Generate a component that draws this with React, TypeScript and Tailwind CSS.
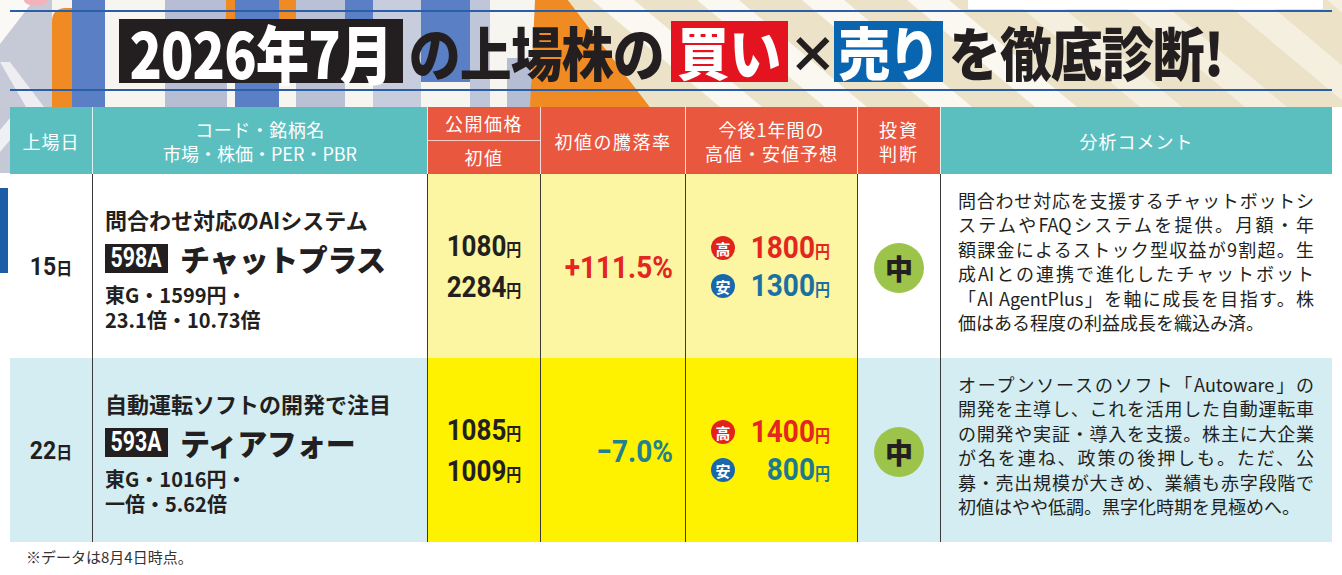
import React from "react";

const cjk = "font-['Noto_Sans_CJK_JP','Noto_Sans',sans-serif]";
const num = "font-['Roboto','Noto_Sans_CJK_JP',sans-serif]";

function Background() {
  const stripes = [592, 697, 802, 907, 1012, 1117, 1222, 1327];
  return (
    <svg className="absolute left-0 top-0" width={1342} height={300} viewBox="0 0 1342 300">
      <rect x={0} y={0} width={1342} height={107} fill="#f7f5f0" />
      <rect x={0} y={0} width={52} height={107} fill="#c6cad7" />
      <polygon points="0,0 34,0 0,44" fill="#fbf9f5" />
      <polygon points="0,62 10,62 44,107 26,107" fill="#eeeef2" />
      <ellipse cx={36} cy={0} rx={12} ry={6} fill="#f2b3bd" />
      <path d="M52 107 L52 22 Q52 8 66 8 L74 8 L74 107 Z" fill="#f08a22" />
      <rect x={72} y={0} width={33} height={107} fill="#5a7fc5" />
      <rect x={165} y={0} width={62} height={107} fill="#b7bed3" />
      <rect x={226} y={0} width={10} height={22} fill="#f08a22" />
      <rect x={235} y={0} width={44} height={107} fill="#5a7fc5" />
      <rect x={279} y={0} width={17} height={60} fill="#f08a22" />
      <rect x={296} y={0} width={49} height={107} fill="#bac1d5" />
      <rect x={345} y={0} width={28} height={34} fill="#5a7fc5" />
      <rect x={373} y={0} width={48} height={107} fill="#c7cddd" />
      <rect x={421} y={0} width={49} height={82} fill="#5a7fc5" />
      <rect x={470} y={0} width={20} height={107} fill="#bfc6d9" />
      <rect x={507} y={58} width={24} height={49} fill="#b5bdd3" />
      <polygon points="530,107 535,0 568,0 650,107" fill="#f08a22" />
      <polygon points="568,0 1342,0 1342,107 650,107" fill="#ebe2c8" />
      {stripes.map((s, i) => (
        <polygon
          key={s}
          points={`${s},0 ${s + 42},0 ${s + 42 + 128},107 ${s + 128},107`}
          fill="#fbf9f3"
          opacity={i < 4 ? 0.95 : 0.55}
        />
      ))}
      <rect x={968} y={0} width={355} height={9} fill="#ffffff" />
      <rect x={0} y={107} width={10} height={66} fill="#c5c9d6" />
      <polygon points="0,130 10,118 10,140 0,152" fill="#eef0f4" />
      <rect x={0} y={188} width={8} height={85} fill="#1d5da8" />
    </svg>
  );
}

type Row = {
  date: string;
  bgA: string;
  bgY: string;
  catchLine: string;
  code: string;
  name: string;
  l3: string;
  l4: string;
  ipo: string;
  first: string;
  rate: string;
  rateColor: string;
  high: string;
  low: string;
  lowColor: string;
  comment: string[];
};

const rows: Row[] = [
  {
    date: "15",
    bgA: "bg-white",
    bgY: "bg-[#fcf5a2]",
    catchLine: "問合わせ対応のAIシステム",
    code: "598A",
    name: "チャットプラス",
    l3: "東G・1599円・",
    l4: "23.1倍・10.73倍",
    ipo: "1080",
    first: "2284",
    rate: "+111.5%",
    rateColor: "text-[#e3261f]",
    high: "1800",
    low: "1300",
    lowColor: "text-[#1b70a2]",
    comment: [
      "問合わせ対応を支援するチャットボットシ",
      "ステムやFAQシステムを提供。月額・年",
      "額課金によるストック型収益が9割超。生",
      "成AIとの連携で進化したチャットボット",
      "「AI AgentPlus」を軸に成長を目指す。株",
      "価はある程度の利益成長を織込み済。",
    ],
  },
  {
    date: "22",
    bgA: "bg-[#d3edf3]",
    bgY: "bg-[#fff200]",
    catchLine: "自動運転ソフトの開発で注目",
    code: "593A",
    name: "ティアフォー",
    l3: "東G・1016円・",
    l4: "一倍・5.62倍",
    ipo: "1085",
    first: "1009",
    rate: "−7.0%",
    rateColor: "text-[#23808d]",
    high: "1400",
    low: "800",
    lowColor: "text-[#1d7a8e]",
    comment: [
      "オープンソースのソフト「Autoware」の",
      "開発を主導し、これを活用した自動運転車",
      "の開発や実証・導入を支援。株主に大企業",
      "が名を連ね、政策の後押しも。ただ、公",
      "募・売出規模が大きめ、業績も赤字段階で",
      "初値はやや低調。黒字化時期を見極めへ。",
    ],
  },
];

function Price({ v, size }: { v: string; size: string }) {
  return (
    <span className={`inline-block scale-y-[1.15] whitespace-nowrap font-bold ${num} ${size}`}>
      {v}
      <span className={`${cjk} text-[15px]`}>円</span>
    </span>
  );
}

function BodyRow({ r }: { r: Row }) {
  const line = "border-l border-[#3a3a3a]";
  return (
    <>
      <div className={`${r.bgA} flex items-center justify-center pt-[3px]`}>
        <span className={`inline-block scale-y-[1.1] font-bold ${num} text-[23px] text-[#231f20]`}>
          {r.date}
          <span className={`${cjk} text-[16px]`}>日</span>
        </span>
      </div>
      <div className={`${r.bgA} ${line} flex flex-col justify-center pl-[12px] pt-[6px] text-[#231f20]`}>
        <div className="whitespace-nowrap text-[22px] font-bold leading-[26px]">{r.catchLine}</div>
        <div className="mt-[10px] flex h-[32px] items-center">
          <div className="flex h-[29px] w-[63px] items-center justify-center bg-[#231f20] text-white">
            <span className={`inline-block scale-x-[0.82] scale-y-[1.05] ${num} text-[26px] font-bold leading-none`}>
              {r.code}
            </span>
          </div>
          <span className="ml-[12px] whitespace-nowrap text-[30px] font-black leading-none tracking-[-0.5px]">
            {r.name}
          </span>
        </div>
        <div className="mt-[8px] whitespace-nowrap text-[20px] font-bold leading-[25px]">
          {r.l3}
          <br />
          {r.l4}
        </div>
      </div>
      <div className={`${r.bgY} ${line} flex flex-col items-center justify-center pt-[4px] text-[#231f20]`}>
        <div className="leading-[38px]">
          <Price v={r.ipo} size="text-[26px]" />
        </div>
        <div className="leading-[38px]">
          <Price v={r.first} size="text-[26px]" />
        </div>
      </div>
      <div className={`${r.bgY} ${line} flex items-center justify-end pr-[12px] pt-[4px]`}>
        <span className={`inline-block scale-y-[1.12] whitespace-nowrap ${num} text-[28px] font-bold ${r.rateColor}`}>
          {r.rate}
        </span>
      </div>
      <div className={`${r.bgY} ${line} flex flex-col justify-center pl-[25px] pt-[2px]`}>
        <div className="flex h-[38px] items-center">
          <span className="flex h-[24px] w-[24px] items-center justify-center rounded-full bg-[#e2231a] text-[15px] font-bold leading-none text-white">
            高
          </span>
          <span className="w-[95px] text-right text-[#e3261f]">
            <Price v={r.high} size="text-[28px]" />
          </span>
        </div>
        <div className="flex h-[38px] items-center">
          <span className="flex h-[24px] w-[24px] items-center justify-center rounded-full bg-[#1a68ac] text-[15px] font-bold leading-none text-white">
            安
          </span>
          <span className={`w-[95px] text-right ${r.lowColor}`}>
            <Price v={r.low} size="text-[28px]" />
          </span>
        </div>
      </div>
      <div className={`${r.bgA} ${line} flex items-center justify-center pt-[3px]`}>
        <div className="flex h-[50px] w-[50px] items-center justify-center rounded-full bg-[#9cc44a] text-[28px] font-black leading-none text-[#231f20]">
          中
        </div>
      </div>
      <div
        className={`${r.bgA} ${line} flex flex-col justify-center pb-[10px] pl-[17px] pr-[18px] text-[18px] leading-[24.5px] text-[#231f20]`}
      >
        {r.comment.map((c, i) => (
          <div key={i} className={i < r.comment.length - 1 ? "text-justify [text-align-last:justify]" : ""}>
            {c}
          </div>
        ))}
      </div>
    </>
  );
}

export default function App() {
  const hTeal = "bg-[#5bbfc0]";
  const hRed = "bg-[#e9573f]";
  const hCell = "flex flex-col items-center justify-center text-white text-[18px] leading-[24px] whitespace-nowrap";
  const sep = "border-l border-white/80";
  return (
    <div className={`relative h-[575px] w-[1342px] overflow-hidden bg-white ${cjk}`}>
      <Background />
      <div className="relative">
        <div className="flex h-[107px] flex-col">
          <div className="mx-[10px] mt-[10px] h-[2px] bg-[#2b5ea8]" />
          <div className="mt-[7px] flex h-[64px] items-center justify-center whitespace-nowrap font-black text-[#231f20]">
            <div className="flex h-[64px] w-[284px] shrink-0 items-center justify-center bg-[#231f20] text-white">
              <span className="inline-block scale-x-[0.92] scale-y-[1.1] whitespace-nowrap text-[58px] leading-none tracking-[-1px]">
                2026年7月
              </span>
            </div>
            <span className="ml-[6px] inline-block scale-y-[1.12] text-[52px] leading-none tracking-[-1px]">
              の上場株の
            </span>
            <div className="ml-[7px] flex h-[61px] w-[117px] shrink-0 items-center justify-center bg-[#e3141f] text-white">
              <span className="inline-block scale-y-[1.1] text-[52px] leading-none">買い</span>
            </div>
            <span className="inline-block w-[46px] text-center text-[50px] leading-none">×</span>
            <div className="flex h-[61px] w-[109px] shrink-0 items-center justify-center bg-[#0a65b1] text-white">
              <span className="inline-block scale-y-[1.1] text-[52px] leading-none tracking-[-2px]">売り</span>
            </div>
            <span className="ml-[6px] inline-block scale-y-[1.12] text-[52px] leading-none tracking-[-1px]">
              を徹底診断!
            </span>
          </div>
          <div className="mx-[10px] mt-[6px] h-[2px] bg-[#2b5ea8]" />
        </div>

        <div className="ml-[10px] grid w-[1322px] grid-cols-[82px_335px_113px_145px_172px_83px_392px] grid-rows-[67px_184px_184px]">
          <div className={`${hCell} ${hTeal} tracking-[1px]`}>上場日</div>
          <div className={`${hCell} ${hTeal} ${sep}`}>
            <div className="tracking-[0.5px]">コード・銘柄名</div>
            <div>市場・株価・PER・PBR</div>
          </div>
          <div className={`${hRed} ${sep} flex flex-col text-[18px] text-white`}>
            <div className="flex h-[34px] items-center justify-center border-b border-white/70 tracking-[1.5px]">
              公開価格
            </div>
            <div className="flex flex-1 items-center justify-center tracking-[1.5px]">初値</div>
          </div>
          <div className={`${hCell} ${hRed} ${sep} tracking-[1.5px]`}>初値の騰落率</div>
          <div className={`${hCell} ${hRed} ${sep} tracking-[1px]`}>
            <div>今後1年間の</div>
            <div>高値・安値予想</div>
          </div>
          <div className={`${hCell} ${hRed} ${sep} tracking-[2px]`}>
            <div>投資</div>
            <div>判断</div>
          </div>
          <div className={`${hCell} ${hTeal} ${sep} tracking-[1px]`}>分析コメント</div>

          {rows.map((r) => (
            <BodyRow key={r.code} r={r} />
          ))}
        </div>

        <div className="mt-[5px] pl-[26px] text-[15px] leading-[20px] text-[#333]">※データは8月4日時点。</div>
      </div>
    </div>
  );
}
